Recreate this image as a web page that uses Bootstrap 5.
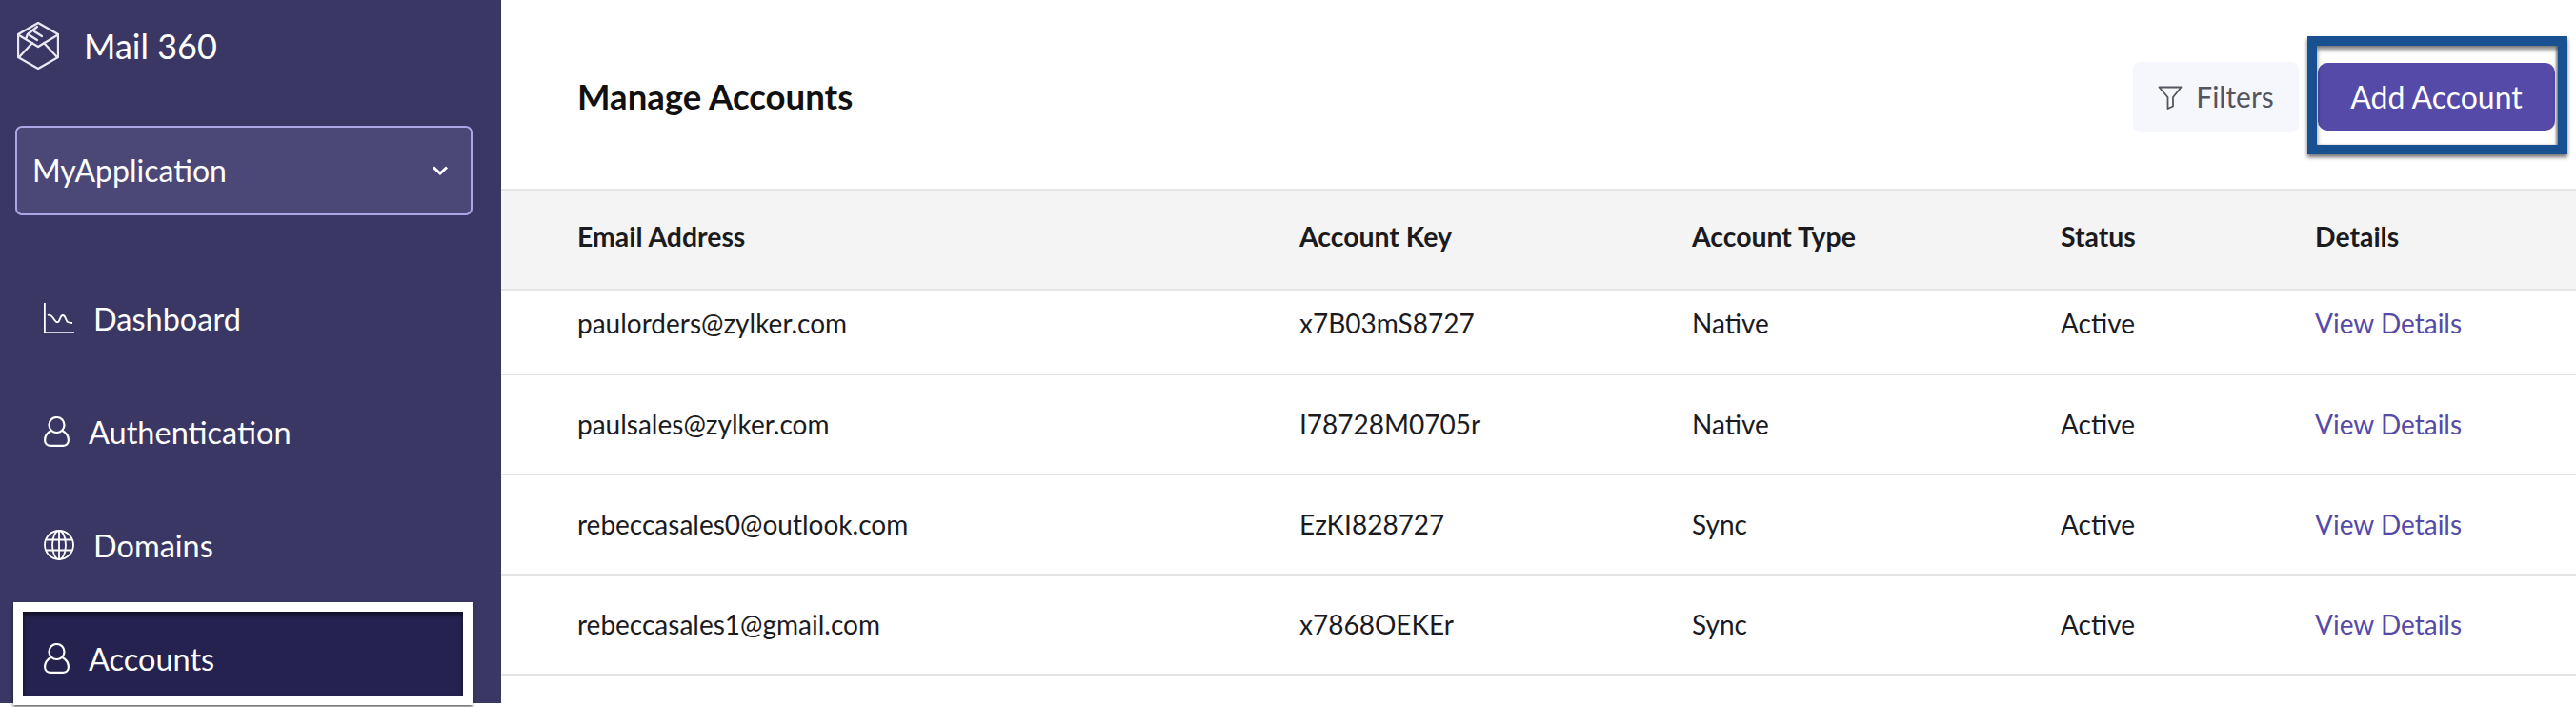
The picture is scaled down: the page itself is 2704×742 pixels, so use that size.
<!DOCTYPE html>
<html lang="en">
<head>
<meta charset="utf-8">
<title>Mail 360 - Manage Accounts</title>
<link href="https://cdn.jsdelivr.net/npm/bootstrap@5.3.0/dist/css/bootstrap.min.css" rel="stylesheet">
<style>
html,body{height:742px;overflow:hidden;background:#fff;}
body{font-family:"Lato","Liberation Sans",sans-serif;color:#1b1b1f;}
.shell{height:738px;}
.side{width:526px;background:#3a3764;color:#fff;flex:none;}
.brand{height:96px;padding-left:18px;gap:26px;font-size:36px;}
.brand svg{width:44px;height:50px;flex:none;}
.app-pick{margin:36px 30px 0 16px;height:94px;padding:0 16px;background:#4b4877;border:2px solid #aba7e4;border-radius:7px;font-size:32px;}
.app-pick svg{width:20px;height:12px;margin-right:6px;}
.side-nav{margin-top:50px;}
.side-link{height:119px;padding-left:46px;font-size:32.500px;color:#fff;text-decoration:none;position:relative;}
.side-link svg{flex:none;}
.ico-wide{width:32px;height:32px;margin-right:20px;margin-top:-3px;}
.ico-user{width:27px;height:32px;margin-right:20px;margin-top:-3px;}
.side-link.current{height:88px;margin-top:9px;margin-left:24px;margin-right:40px;padding-left:22px;padding-top:12px;background:#25224f;}
.current-box{position:absolute;inset:-10px;border:10px solid #fff;box-shadow:0 2px 3px rgba(0,0,0,.6),inset 0 3px 5px rgba(0,0,0,.6);pointer-events:none;}
.topbar{height:198px;padding:5px 22px 0 80px;}
.page-title{font-size:36.600px;font-weight:700;margin:0;color:#111;}
.btn-filter{width:174px;height:74px;background:#f6f7fc;border:0;border-radius:8px;font-size:30px;color:#55555f;gap:14px;padding:0;}
.btn-filter svg{width:26px;height:26px;}
.add-wrap{position:relative;margin-left:20px;}
.btn-add{width:249px;height:71px;background:#564aa8;border:0;border-radius:10px;color:#fff;font-size:32px;padding:0;}
.add-box{position:absolute;left:-11px;right:-13px;top:-28px;bottom:-25px;border:10px solid #19508f;box-shadow:0 3px 4px rgba(0,0,0,.55),inset 0 4px 5px rgba(0,0,0,.5),inset -2px 0 2px rgba(0,0,0,.3);pointer-events:none;}
.acct-table{table-layout:fixed;width:100%;margin:0;font-size:28px;}
.acct-table th,.acct-table td{padding:0;vertical-align:middle;border-bottom:2px solid #e4e4e4;color:#1b1b1f;}
.acct-table thead th{height:105px;background:#f4f4f4;border-top:2px solid #e4e4e4;font-weight:700;font-size:28.400px;padding-bottom:6px;}
.acct-table td{height:105px;padding-bottom:2px;}
.acct-table tbody tr:first-child td{height:89px;padding-bottom:20px;}
.c1{width:838px;padding-left:80px!important;}
.c2{width:412px;}
.c3{width:387px;}
.c4{width:267px;}
.view-link{color:#564aa8;text-decoration:none;}
</style>
</head>
<body>
<div class="d-flex shell">
  <aside class="side">
    <div class="brand d-flex align-items-center">
      <svg viewBox="-1 -1 44 50" fill="none" stroke="#e9e8f4" stroke-width="2.300" stroke-linejoin="round" stroke-linecap="round"><path d="M21 0 42 12V36L21 48 0 36V12Z"/><path d="M1 13 21 25 41 13"/><path d="M1 36 15 21M41 36 27 21"/><path d="M8 17 10 12 20 4"/><path d="M17 9 25 14M12 13 20 18"/></svg>
      <span>Mail 360</span>
    </div>
    <div class="app-pick d-flex align-items-center justify-content-between">
      <span>MyApplication</span>
      <svg viewBox="0 0 20 12" fill="none" stroke="#fff" stroke-width="3"><path d="M3 2.500 10 9l7-6.500"/></svg>
    </div>
    <nav class="side-nav">
      <a class="side-link d-flex align-items-center" href="#">
        <svg class="ico-wide" viewBox="0 0 32 32" fill="none" stroke="#fff" stroke-width="1.800"><path d="M.9 0V31.100H32"/><path d="M4 13c2-1 4 0 6 3s3 5 5 4 2-7 5-7 3 6 5 7 3 1 5 1"/></svg>
        <span>Dashboard</span>
      </a>
      <a class="side-link d-flex align-items-center" href="#">
        <svg class="ico-user" viewBox="0 0 27 32" fill="none" stroke="#fff" stroke-width="2.200"><ellipse cx="13.500" cy="9" rx="8" ry="8"/><path d="M7.500 15C3 17.500 1.100 21 1.100 25c0 4 3 5.900 6 5.900h13c3 0 5.800-2 5.800-5.900 0-4-2-7.500-6.400-10"/></svg>
        <span>Authentication</span>
      </a>
      <a class="side-link d-flex align-items-center" href="#">
        <svg class="ico-wide" viewBox="0 0 32 32" fill="none" stroke="#fff" stroke-width="1.800"><circle cx="16" cy="16" r="15"/><ellipse cx="16" cy="16" rx="7" ry="15"/><path d="M16 1V31M2.500 10.500H29.500M2.500 21.500H29.500"/></svg>
        <span>Domains</span>
      </a>
      <a class="side-link current d-flex align-items-center" href="#">
        <svg class="ico-user" viewBox="0 0 27 32" fill="none" stroke="#fff" stroke-width="2.200"><ellipse cx="13.500" cy="9" rx="8" ry="8"/><path d="M7.500 15C3 17.500 1.100 21 1.100 25c0 4 3 5.900 6 5.900h13c3 0 5.800-2 5.800-5.900 0-4-2-7.500-6.400-10"/></svg>
        <span>Accounts</span>
        <span class="current-box"></span>
      </a>
    </nav>
  </aside>
  <main class="flex-grow-1">
    <div class="topbar d-flex align-items-center justify-content-between">
      <h1 class="page-title">Manage Accounts</h1>
      <div class="d-flex align-items-center">
        <button class="btn btn-filter d-flex align-items-center justify-content-center" type="button">
          <svg viewBox="0 0 26 26" fill="none" stroke="#55555f" stroke-width="1.800" stroke-linejoin="round"><path d="M1.500 2.500H24.500L16 13V22.500L10.500 25V13Z"/></svg>
          <span>Filters</span>
        </button>
        <div class="add-wrap">
          <button class="btn btn-add" type="button">Add Account</button>
          <span class="add-box"></span>
        </div>
      </div>
    </div>
    <table class="table acct-table">
      <thead>
        <tr><th class="c1">Email Address</th><th class="c2">Account Key</th><th class="c3">Account Type</th><th class="c4">Status</th><th>Details</th></tr>
      </thead>
      <tbody>
        <tr><td class="c1">paulorders@zylker.com</td><td>x7B03mS8727</td><td>Native</td><td>Active</td><td><a class="view-link" href="#">View Details</a></td></tr>
        <tr><td class="c1">paulsales@zylker.com</td><td>I78728M0705r</td><td>Native</td><td>Active</td><td><a class="view-link" href="#">View Details</a></td></tr>
        <tr><td class="c1">rebeccasales0@outlook.com</td><td>EzKI828727</td><td>Sync</td><td>Active</td><td><a class="view-link" href="#">View Details</a></td></tr>
        <tr><td class="c1">rebeccasales1@gmail.com</td><td>x7868OEKEr</td><td>Sync</td><td>Active</td><td><a class="view-link" href="#">View Details</a></td></tr>
      </tbody>
    </table>
  </main>
</div>
<script src="https://cdn.jsdelivr.net/npm/bootstrap@5.3.0/dist/js/bootstrap.bundle.min.js"></script>
</body>
</html>
